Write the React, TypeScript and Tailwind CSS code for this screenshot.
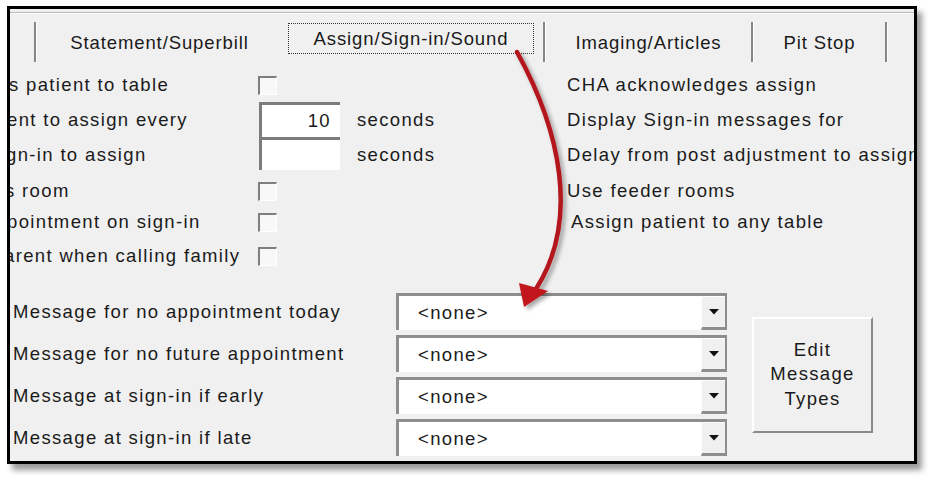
import React from "react";

function Sep() {
  return (
    <div className="flex mt-[8px] h-[40px]">
      <div className="w-[2px] bg-[#868686]" />
      <div className="w-px bg-white" />
    </div>
  );
}

function Checkbox() {
  return (
    <div className="w-[19px] h-[19px] border-t-2 border-l-2 border-[#7e7e7e] border-r border-b border-r-white border-b-white bg-[#f8f8f8]" />
  );
}

function Combo() {
  return (
    <div className="flex h-[37px] w-[331px] border-t-[3px] border-l-[3px] border-r-2 border-b-0 border-[#8e8e8e] bg-white">
      <div className="flex-1 flex items-center pl-[19px]">&lt;none&gt;</div>
      <div className="w-[24px] mt-px bg-[#f0f0f0] border-l border-l-white border-b-[3px] border-b-[#8e8e8e] flex items-center justify-center">
        <svg width="10" height="6" viewBox="0 0 10 6">
          <path d="M0 0 H10 L5 5.5 Z" fill="#111" />
        </svg>
      </div>
    </div>
  );
}

export default function App() {
  return (
    <div className="relative w-[934px] h-[484px] bg-white font-['Liberation_Sans',Arial,sans-serif] text-[18.5px] tracking-[1.35px] text-[#1a1a1a] leading-[22px]">
      <div className="pt-[6px] pl-[7px]">
        <div className="relative w-[910px] h-[458px] border-[3px] border-black bg-[#f0f0f0] shadow-[5px_6px_6px_rgba(0,0,0,0.4)] overflow-hidden flex flex-col">
          {/* top edge of tab control */}
          <div className="h-[3px]" />
          <div className="h-px bg-[#b9b9b9]" />
          <div className="h-px bg-white" />
          {/* tab row */}
          <div className="flex h-[48px] whitespace-nowrap tracking-[0.9px]">
            <div className="w-[24px]" />
            <Sep />
            <div className="w-[245px] mt-[8px] pt-[2px] flex items-center justify-center">Statement/Superbill</div>
            <div className="w-[261px] pt-[9px]">
              <div className="ml-[6px] w-[246px] h-[31px] border border-dotted border-[#333] flex items-center justify-center">
                Assign/Sign-in/Sound
              </div>
            </div>
            <Sep />
            <div className="w-[205px] mt-[8px] pt-[2px] flex items-center justify-center">Imaging/Articles</div>
            <Sep />
            <div className="w-[131px] mt-[8px] pt-[2px] flex items-center justify-center">Pit Stop</div>
            <Sep />
            <div className="flex-1" />
          </div>
          {/* upper grid */}
          <div className="mt-[6px] grid grid-cols-[248px_99px_210px_1fr] grid-rows-[34px_35px_36px_36px_26px_42px] whitespace-nowrap">
            <div className="flex items-center overflow-hidden"><span className="ml-[-1px]">s patient to table</span></div>
            <div className="flex items-center"><Checkbox /></div>
            <div />
            <div className="flex items-center">CHA acknowledges assign</div>

            <div className="flex items-center overflow-hidden"><span className="ml-[-3px]">ent to assign every</span></div>
            <div className="flex items-stretch pl-px">
              <div className="w-[81px] bg-white border-t-[3px] border-l-[3px] border-[#7c7c7c] flex items-center justify-end pr-[9px]">10</div>
            </div>
            <div className="flex items-center">seconds</div>
            <div className="flex items-center">Display Sign-in messages for</div>

            <div className="flex items-center overflow-hidden"><span className="ml-[-4px]">gn-in to assign</span></div>
            <div className="flex items-start pl-px">
              <div className="w-[81px] h-[33px] bg-white border-t-[3px] border-l-[3px] border-[#7c7c7c]" />
            </div>
            <div className="flex items-center">seconds</div>
            <div className="flex items-center">Delay from post adjustment to assign</div>

            <div className="flex items-center overflow-hidden"><span className="ml-[-5px]">s room</span></div>
            <div className="flex items-center"><Checkbox /></div>
            <div />
            <div className="flex items-center">Use feeder rooms</div>

            <div className="flex items-center overflow-hidden"><span className="ml-[-3px]">pointment on sign-in</span></div>
            <div className="flex items-center"><Checkbox /></div>
            <div />
            <div className="flex items-center pl-[4px]">Assign patient to any table</div>

            <div className="flex items-center overflow-hidden"><span className="ml-[-6px]">arent when calling family</span></div>
            <div className="flex items-center"><Checkbox /></div>
            <div />
            <div />
          </div>
          {/* bottom section */}
          <div className="mt-[16px] flex whitespace-nowrap">
            <div className="w-[386px] pl-[3px] flex flex-col gap-[5px]">
              <div className="h-[37px] flex items-center">Message for no appointment today</div>
              <div className="h-[37px] flex items-center">Message for no future appointment</div>
              <div className="h-[37px] flex items-center">Message at sign-in if early</div>
              <div className="h-[37px] flex items-center">Message at sign-in if late</div>
            </div>
            <div className="flex flex-col gap-[5px]">
              <Combo />
              <Combo />
              <Combo />
              <Combo />
            </div>
            <div className="ml-[25px] self-center w-[121px] h-[116px] bg-[#f0f0f0] border-t-2 border-l-2 border-t-white border-l-white border-r-2 border-b-2 border-r-[#8a8a8a] border-b-[#8a8a8a] flex flex-col items-center justify-center leading-[24.5px] text-center">
              <span>Edit</span>
              <span>Message</span>
              <span>Types</span>
            </div>
          </div>
        </div>
      </div>
      {/* red annotation arrow */}
      <svg className="absolute inset-0 pointer-events-none" width="934" height="484" viewBox="0 0 934 484">
        <defs>
          <filter id="sh" x="-50%" y="-50%" width="200%" height="200%">
            <feDropShadow dx="3" dy="3" stdDeviation="2" floodColor="#000" floodOpacity="0.35" />
          </filter>
        </defs>
        <g filter="url(#sh)">
          <path d="M517 52 C560 130 580 220 536 289" fill="none" stroke="#b3161c" strokeWidth="4.5" strokeLinecap="round" />
          <polygon points="519,283 548,291 524,307" fill="#c0141c" />
        </g>
      </svg>
    </div>
  );
}
